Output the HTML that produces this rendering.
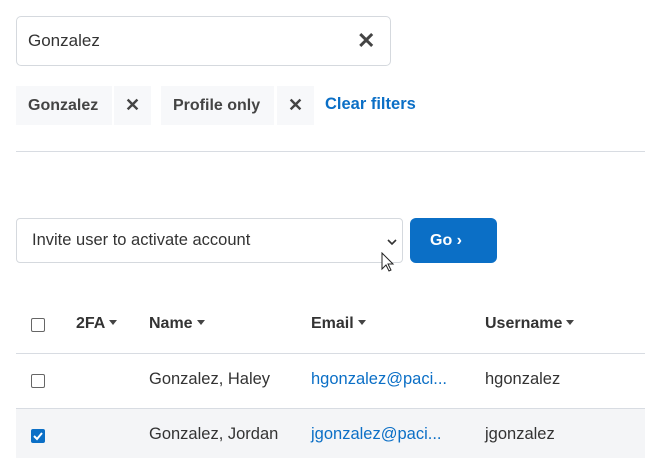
<!DOCTYPE html>
<html><head><style>
*{box-sizing:border-box;margin:0;padding:0}
body{width:645px;height:458px;overflow:hidden;background:#fff;font-family:"Liberation Sans",sans-serif;color:#333;position:relative}
.abs{position:absolute}
.search{left:16px;top:16px;width:375px;height:50px;border:1px solid #d5d9de;border-radius:5px}
.search span{position:absolute;left:11px;top:14px;font-size:17px;color:#333}
.x{position:absolute;font-weight:bold;color:#444}
.chip{top:86px;height:39px;background:#f7f8fa;font-weight:bold;font-size:16px;color:#444;line-height:39px}
.hr{left:16px;top:151px;width:629px;height:1px;background:#d8dce2}
.sel{left:16px;top:218px;width:387px;height:45px;border:1px solid #d5d9de;border-radius:4px}
.go{left:410px;top:218px;width:87px;height:45px;background:#0b6fc6;border-radius:6px;color:#fff;font-weight:bold;font-size:16px;line-height:45px;padding-left:20px}
.cb{width:14px;height:14px;border:1px solid #666;border-radius:2px;background:#fff}
.th{font-weight:bold;font-size:16px;color:#333;top:315px}
.td{font-size:16.5px;color:#333}
.link{color:#0b6fc6}
.caret{display:inline-block;border-left:4px solid transparent;border-right:4px solid transparent;border-top:5px solid #444;margin-left:4px;vertical-align:3px}
</style></head><body>
<div class="abs search"><span>Gonzalez</span><div class="x" style="left:340px;top:11px;font-size:22px">✕</div></div>
<div class="abs chip" style="left:16px;width:96px;padding-left:12px">Gonzalez</div>
<div class="abs chip" style="left:114px;width:37px;text-align:center;font-size:18px">✕</div>
<div class="abs chip" style="left:161px;width:113px;padding-left:12px">Profile only</div>
<div class="abs chip" style="left:277px;width:37px;text-align:center;font-size:18px">✕</div>
<div class="abs" style="left:325px;top:95px;font-weight:bold;font-size:16.5px;color:#0b6fc6">Clear filters</div>
<div class="abs hr"></div>
<div class="abs sel"><span style="position:absolute;left:15px;top:12px;font-size:16.5px;color:#333">Invite user to activate account</span>
<svg style="position:absolute;left:369px;top:18px" width="12" height="10"><path d="M2 3l4 4 4-4" fill="none" stroke="#333" stroke-width="1.6"/></svg></div>
<svg class="abs" style="left:381px;top:252px" width="14" height="22"><path d="M1 1v16l4-4 3 6 2-1-3-6h5z" fill="#fff" stroke="#222" stroke-width="1"/></svg>
<div class="abs go">Go ›</div>
<div class="abs cb" style="left:31px;top:318px"></div>
<div class="abs th" style="left:76px">2FA<span class="caret"></span></div>
<div class="abs th" style="left:149px">Name<span class="caret"></span></div>
<div class="abs th" style="left:311px">Email<span class="caret"></span></div>
<div class="abs th" style="left:485px">Username<span class="caret"></span></div>
<div class="abs" style="left:16px;top:353px;width:629px;height:1px;background:#d8dce2"></div>
<div class="abs cb" style="left:31px;top:374px"></div>
<div class="abs td" style="left:149px;top:370px">Gonzalez, Haley</div>
<div class="abs td link" style="left:311px;top:370px">hgonzalez@paci...</div>
<div class="abs td" style="left:485px;top:370px">hgonzalez</div>
<div class="abs" style="left:16px;top:408px;width:629px;height:50px;background:#f4f5f7;border-top:1px solid #d8dce2"></div>
<div class="abs" style="left:31px;top:429px;width:14px;height:14px;background:#0b6fc6;border-radius:2px"><svg width="14" height="14"><path d="M3 7l3 3 5-6" fill="none" stroke="#fff" stroke-width="2"/></svg></div>
<div class="abs td" style="left:149px;top:425px">Gonzalez, Jordan</div>
<div class="abs td link" style="left:311px;top:425px">jgonzalez@paci...</div>
<div class="abs td" style="left:485px;top:425px">jgonzalez</div>
</body></html>
